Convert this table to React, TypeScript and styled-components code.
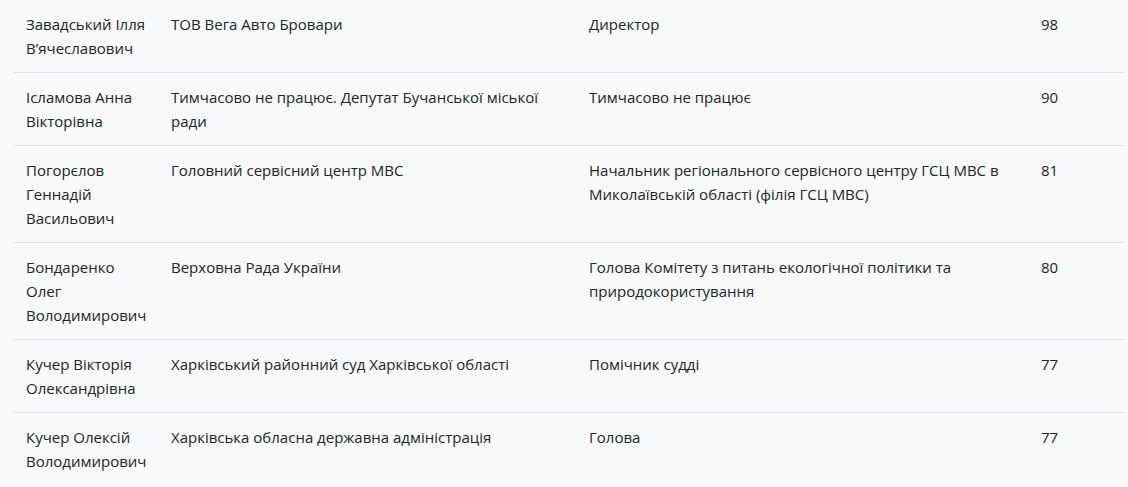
import styled, { createGlobalStyle } from 'styled-components';

const GlobalStyle = createGlobalStyle`
  html, body {
    margin: 0;
    background: #f8f9fa;
  }
  body {
    font-family: "Open Sans", "Noto Sans", sans-serif;
    color: #212529;
  }
`;

const rows = [
  { name: 'Завадський Ілля В’ячеславович', org: 'ТОВ Вега Авто Бровари', position: 'Директор', score: 98 },
  { name: 'Ісламова Анна Вікторівна', org: 'Тимчасово не працює. Депутат Бучанської міської ради', position: 'Тимчасово не працює', score: 90 },
  { name: 'Погорєлов Геннадій Васильович', org: 'Головний сервісний центр МВС', position: 'Начальник регіонального сервісного центру ГСЦ МВС в Миколаївській області (філія ГСЦ МВС)', score: 81 },
  { name: 'Бондаренко Олег Володимирович', org: 'Верховна Рада України', position: 'Голова Комітету з питань екологічної політики та природокористування', score: 80 },
  { name: 'Кучер Вікторія Олександрівна', org: 'Харківський районний суд Харківської області', position: 'Помічник судді', score: 77 },
  { name: 'Кучер Олексій Володимирович', org: 'Харківська обласна державна адміністрація', position: 'Голова', score: 77 },
];

const Wrapper = styled.div`
  padding: 0 4px 0 14px;
`;

const Table = styled.table`
  width: 100%;
  border-collapse: collapse;
  table-layout: fixed;
  font-size: 15px;
  line-height: 24px;
`;

const Row = styled.tr<{ last?: boolean }>`
  border-bottom: ${p => (p.last ? 'none' : '1px solid #dee2e6')};
`;

const Cell = styled.td`
  padding: 12px;
  vertical-align: top;
  overflow-wrap: break-word;
`;

export default function App() {
  return (
    <Wrapper>
      <GlobalStyle />
      <Table>
        <colgroup>
          <col style={{ width: 145 }} />
          <col style={{ width: 418 }} />
          <col style={{ width: 452 }} />
          <col />
        </colgroup>
        <tbody>
          {rows.map((r, i) => (
            <Row key={r.name} last={i === rows.length - 1}>
              <Cell>{r.name}</Cell>
              <Cell>{r.org}</Cell>
              <Cell>{r.position}</Cell>
              <Cell>{r.score}</Cell>
            </Row>
          ))}
        </tbody>
      </Table>
    </Wrapper>
  );
}
